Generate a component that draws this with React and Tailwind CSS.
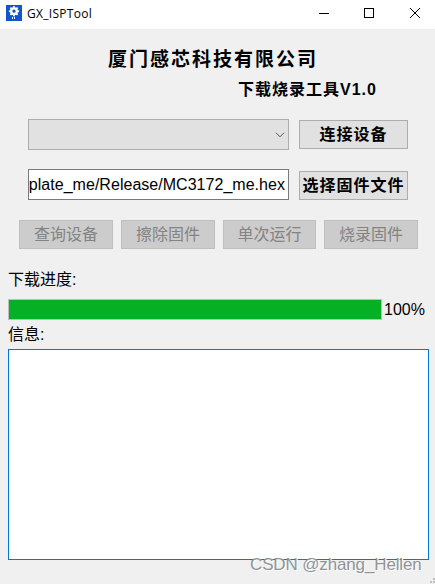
const ui = "font-['Liberation_Sans','Noto_Sans_CJK_SC',sans-serif]";

function AppIcon() {
  const teeth = [0, 45, 90, 135, 180, 225, 270, 315];
  return (
    <svg className="h-4 w-4 shrink-0" viewBox="0 0 16 16">
      <rect width="16" height="16" fill="#1155cc" />
      <g transform="translate(8 6.2)">
        <circle r="2.8" fill="none" stroke="#fff" strokeWidth="2.3" />
        {teeth.map((angle) => (
          <rect key={angle} x="-0.9" y="-5.1" width="1.8" height="2" fill="#fff" transform={`rotate(${angle})`} />
        ))}
      </g>
      <path d="M6.5 12v2M8.5 12v2" stroke="#fff" strokeWidth="1" />
    </svg>
  );
}

function TitleBar() {
  return (
    <header className="flex h-[29px] shrink-0 items-start bg-white pl-1.5">
      <div className="flex h-[26px] items-center gap-[5px]">
        <AppIcon />
        <span className="pt-px font-['Open_Sans','Noto_Sans_CJK_SC',sans-serif] text-[12px] leading-4 tracking-[0.3px]">GX_ISPTool</span>
      </div>
      <div className="ml-auto flex h-[26px] pr-[15px]">
        <svg width="101" height="26" viewBox="0 0 101 26" fill="none" stroke="#000" shapeRendering="crispEdges">
          <path d="M0 13.5h10" />
          <rect x="45.5" y="8.5" width="9" height="9" />
          <path d="M91 8l10 10M101 8l-10 10" shapeRendering="auto" />
        </svg>
      </div>
    </header>
  );
}

function BoldButton({ children }) {
  return (
    <button className="flex h-[29px] w-[109px] shrink-0 items-center justify-center whitespace-nowrap border border-[#adadad] bg-[#e1e1e1] text-[16px] font-bold leading-5 tracking-[1px]">
      {children}
    </button>
  );
}

function DisabledButton({ children, className = "w-[94px]" }) {
  return (
    <button disabled className={`flex h-[29px] shrink-0 items-center justify-center border border-[#bfbfbf] bg-[#cccccc] pt-px text-[16px] leading-5 text-[#838383] ${className}`}>
      {children}
    </button>
  );
}

export default function App() {
  return (
    <div className={`relative flex h-[584px] w-[435px] flex-col overflow-hidden bg-[#f0f0f0] text-black ${ui}`}>
      <TitleBar />
      <main className="flex flex-col">
        <h1 className="mt-[19px] pl-[108px] text-[19px] font-bold leading-6 tracking-[2px]">厦门感芯科技有限公司</h1>
        <h2 className="mt-2 pl-[238px] text-[16px] font-bold leading-5 tracking-[1px]">下载烧录工具V1.0</h2>

        <div className="mt-[19px] flex items-center gap-2.5 pl-7">
          <div className="flex h-[31px] w-[261px] items-center justify-end border border-[#adadad] bg-[#e1e1e1] pr-[3px]">
            <svg width="10" height="6" viewBox="0 0 10 6" fill="none" stroke="#555">
              <path d="M1 0.8l4 4 4-4" />
            </svg>
          </div>
          <BoldButton>连接设备</BoldButton>
        </div>

        <div className="mt-[19px] flex items-end gap-2.5 pl-7">
          <div className="flex h-[31px] w-[261px] items-center justify-end overflow-hidden whitespace-nowrap border border-[#7a7a7a] bg-white pr-[3px] text-[16px] leading-5 tracking-[0.03px]">
            plate_me/Release/MC3172_me.hex
          </div>
          <BoldButton>选择固件文件</BoldButton>
        </div>

        <div className="mt-5 flex gap-2 pl-[19px]">
          <DisabledButton>查询设备</DisabledButton>
          <DisabledButton>擦除固件</DisabledButton>
          <DisabledButton className="w-[93px]">单次运行</DisabledButton>
          <DisabledButton>烧录固件</DisabledButton>
        </div>

        <div className="mt-[21px] pl-2 text-[16px] leading-5">下载进度:</div>
        <div className="mt-[9px] flex items-center gap-0.5 pl-2">
          <div className="h-[21px] w-[374px] border border-[#bcbcbc] bg-[#06b025]" />
          <span className="text-[16px] leading-5">100%</span>
        </div>
        <div className="mt-[5px] pl-2 text-[16px] leading-5">信息:</div>
        <div className="ml-2 mt-1 h-[211px] w-[421px] border border-[#0078d7] bg-white" />
      </main>

      <div className="absolute left-[250px] top-[554px] whitespace-nowrap font-['Liberation_Sans',sans-serif] text-[17px] leading-[22px] tracking-[-0.14px] text-[#909498] [text-shadow:1px_1px_0_#fff]">
        CSDN @zhang_Hellen
      </div>
      <svg className="absolute bottom-0 right-0" width="6" height="6" viewBox="0 0 6 6" fill="#bfbfbf">
        <path d="M4 0h2v2h-2zM1 3h2v2h-2zM4 3h2v2h-2z" />
      </svg>
    </div>
  );
}
